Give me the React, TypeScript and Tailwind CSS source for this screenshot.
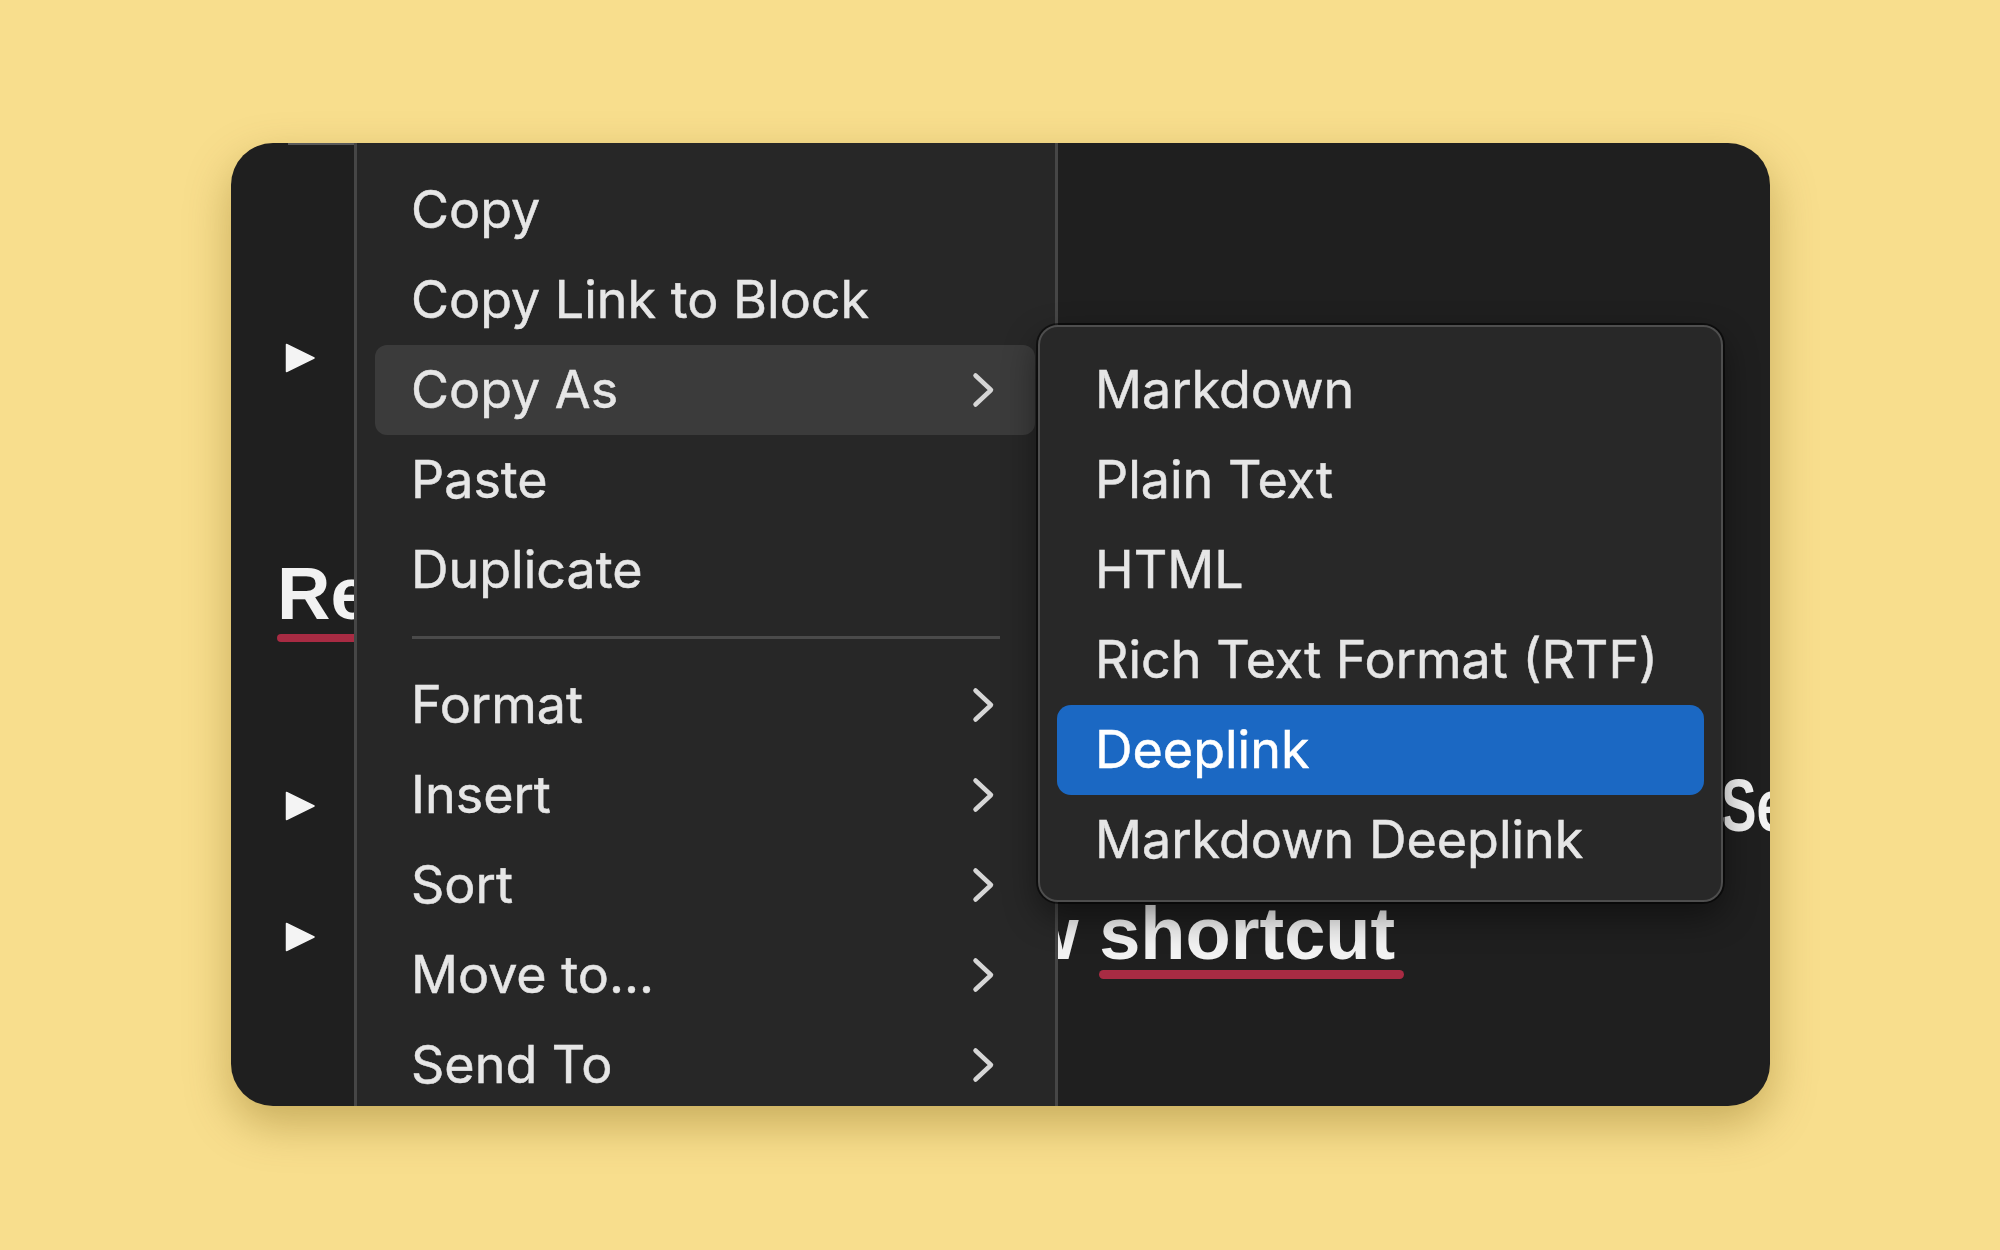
import React from "react";

type Item = { label: string; sub?: boolean; active?: boolean } | "sep";

const mainItems: Item[] = [
  { label: "Copy" },
  { label: "Copy Link to Block" },
  { label: "Copy As", sub: true, active: true },
  { label: "Paste" },
  { label: "Duplicate" },
  "sep",
  { label: "Format", sub: true },
  { label: "Insert", sub: true },
  { label: "Sort", sub: true },
  { label: "Move to...", sub: true },
  { label: "Send To", sub: true },
];

const subItems = [
  { label: "Markdown" },
  { label: "Plain Text" },
  { label: "HTML" },
  { label: "Rich Text Format (RTF)" },
  { label: "Deeplink", active: true },
  { label: "Markdown Deeplink" },
];

function Chevron() {
  return (
    <svg width="23" height="36" viewBox="0 0 23 36" fill="none">
      <path
        d="M3.5 3.5 L19 18 L3.5 32.5"
        stroke="#d6d6d6"
        strokeWidth="4.5"
        strokeLinecap="round"
        strokeLinejoin="round"
      />
    </svg>
  );
}

function Tri() {
  return (
    <svg width="30" height="30" viewBox="0 0 30 30" className="shrink-0">
      <path d="M1.5 1.5 L29 15 L1.5 28.5 Z" fill="#f4f4f4" stroke="#f4f4f4" strokeWidth="1.5" strokeLinejoin="round" />
    </svg>
  );
}

export default function App() {
  return (
    <div className="w-[2000px] h-[1250px] bg-[#f8de8d] pl-[231px] pt-[143px]">
      <div className="relative w-[1539px] h-[963px] rounded-[42px] bg-[#1f1f1f] overflow-hidden shadow-[0_18px_45px_rgba(110,80,0,0.35)]">
        {/* background editor content */}
        <div className="flex flex-col pt-[200px] pl-[54px] font-['Liberation_Sans','Arial',sans-serif] font-bold text-[#f2f2f2]">
          <Tri />
          <div className="mt-[183px] -ml-[8px] flex flex-col">
            <div className="text-[74px] leading-[76px]">Re</div>
            <div className="mt-[2px] h-[8px] w-[300px] bg-[#a82b43] rounded-full" />
          </div>
          <div className="mt-[126px] h-[76px] flex items-center">
            <Tri />
            <div className="ml-[1406px] text-[74px] leading-[76px] whitespace-nowrap scale-x-[0.72] origin-left">Se</div>
          </div>
          <div className="mt-[55px] h-[76px] flex items-center">
            <Tri />
            <div className="ml-[706px] flex items-start text-[74px] leading-[76px] whitespace-nowrap">
              <span>w&nbsp;</span>
              <span className="flex flex-col">
                <span>shortcut</span>
                <span className="-mt-[2px] h-[9px] w-[305px] rounded-full bg-[#a82b43]" />
              </span>
            </div>
          </div>
        </div>

        {/* small top edge line */}
        <div className="absolute left-[57px] top-0 w-[66px] h-[2px] bg-[#5a5a5a]" />

        {/* main context menu */}
        <div className="absolute left-[123px] top-0 bottom-0 w-[704px] border-x-[3px] border-[#464646] bg-[#272727] pt-[22px] font-['Inter','Noto_Sans',sans-serif] text-[52px] text-[#e6e6e6] [-webkit-text-stroke:0.5px_#e6e6e6]">
          {mainItems.map((it, i) =>
            it === "sep" ? (
              <div key={i} className="h-[45px] flex items-center pl-[55px] pr-[55px]">
                <div className="h-[3px] w-full bg-[#4a4a4a]" />
              </div>
            ) : (
              <div
                key={i}
                className={`ml-[18px] mr-[20px] h-[90px] flex items-center justify-between pl-[36px] pr-[40px] rounded-[12px] whitespace-nowrap ${
                  it.active ? "bg-[#3b3b3b]" : ""
                }`}
              >
                <span className="leading-[90px]">{it.label}</span>
                {it.sub && <Chevron />}
              </div>
            )
          )}
        </div>

        {/* submenu */}
        <div className="absolute left-[807px] top-[182px] w-[685px] h-[577px] rounded-[20px] border-2 border-[#4e4e4e] bg-[#282828] pt-[18px] shadow-[0_0_0_2px_rgba(0,0,0,0.55),0_14px_34px_rgba(0,0,0,0.45)] font-['Inter','Noto_Sans',sans-serif] text-[52px] text-[#e6e6e6]">
          {subItems.map((it, i) => (
            <div
              key={i}
              className={`mx-[17px] h-[90px] flex items-center pl-[38px] rounded-[14px] whitespace-nowrap ${
                it.active
                  ? "bg-[#1b68c3] text-white [-webkit-text-stroke:0.5px_#ffffff]"
                  : "[-webkit-text-stroke:0.5px_#e6e6e6]"
              }`}
            >
              <span className="leading-[90px]">{it.label}</span>
            </div>
          ))}
        </div>
      </div>
    </div>
  );
}
